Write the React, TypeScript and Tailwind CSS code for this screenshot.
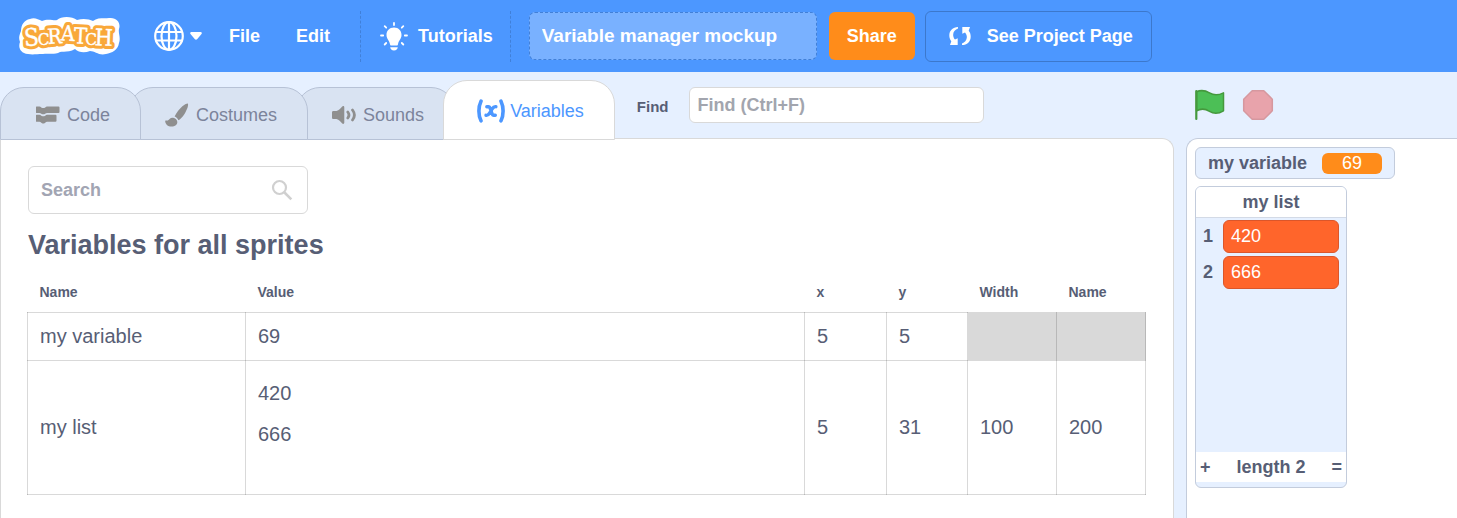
import React from "react";

const LETTERS = [
  { c: "S", x: 32, y: 45.5, s: 24, r: -3 },
  { c: "C", x: 43.5, y: 45, s: 17, r: 0 },
  { c: "R", x: 55, y: 43.5, s: 21, r: -4 },
  { c: "A", x: 67.5, y: 40.5, s: 21, r: 3 },
  { c: "T", x: 80, y: 43.5, s: 22, r: 3 },
  { c: "C", x: 91, y: 44.5, s: 17, r: 0 },
  { c: "H", x: 103.5, y: 45.5, s: 23, r: 2 },
];

function LogoLetters({ stroke, width }: { stroke: string; width: number }) {
  return (
    <g stroke={stroke} strokeWidth={width} fill={stroke} strokeLinejoin="round">
      {LETTERS.map((l, i) => (
        <text
          key={i}
          x={l.x}
          y={l.y}
          fontSize={l.s}
          textAnchor="middle"
          transform={`rotate(${l.r} ${l.x} ${l.y})`}
        >
          {l.c}
        </text>
      ))}
    </g>
  );
}

function Logo() {
  return (
    <svg
      viewBox="19 16 102 40"
      className="h-10 w-[102px] shrink-0 font-['DejaVu_Serif_Condensed','DejaVu_Serif',serif] font-normal"
      role="img"
      aria-label="Scratch"
    >
      <path
        d="M30 19C34 17 38 19 42 21C48 18 54 21 57 20C61 16 72 16 77 20C83 18 89 19 93 21C98 17 105 19 109 18C117 17 121 23 119 29C118 33 121 38 119 43C118 50 112 53 106 54C99 56 95 51 90 51C85 53 79 53 75 49C69 53 63 51 60 52C55 55 48 53 43 54C36 54 33 55 28 54C20 53 18 47 20 42C18 37 20 34 21 31C21 25 24 20 30 19Z"
        fill="#fff"
      />
      <LogoLetters stroke="#F9A83A" width={6.5} />
      <path d="M32 37.500L104 36" stroke="#F9A83A" strokeWidth="14" />
      <LogoLetters stroke="#fff" width={0.4} />
    </svg>
  );
}

function GlobeIcon() {
  return (
    <svg viewBox="0 0 30 30" className="size-[30px]" fill="none" stroke="#fff" strokeWidth="2.200" aria-hidden="true">
      <circle cx="15" cy="15" r="13.800" />
      <ellipse cx="15" cy="15" rx="7.500" ry="13.800" />
      <path d="M15 1V29M1.500 11H28.500M1.500 19.500H28.500" />
    </svg>
  );
}

function BulbIcon() {
  return (
    <svg viewBox="0 0 28 30" className="h-[30px] w-7 shrink-0" aria-hidden="true">
      <path
        d="M14 6.500C9.400 6.500 6.500 9.800 6.500 14C6.500 18 9.500 19.500 10 23.200C10.100 24 10.500 24.500 11.300 24.500H16.700C17.500 24.500 17.900 24 18 23.200C18.500 19.500 21.500 18 21.500 14C21.500 9.800 18.600 6.500 14 6.500ZM10.200 26.300H17.800C17.600 28.200 16.300 29.500 14 29.500C11.700 29.500 10.400 28.200 10.200 26.300Z"
        fill="#fff"
      />
      <path
        d="M14 2V4M4.700 5.200L6.200 6.700M23.300 5.200L21.800 6.700M1 14.500H3.200M24.800 14.500H27M4.700 23.500L6.200 22M23.300 23.500L21.800 22"
        stroke="#fff"
        strokeWidth="1.800"
        strokeLinecap="round"
      />
    </svg>
  );
}

function RemixIcon() {
  return (
    <svg viewBox="0 0 22 20" className="h-5 w-[22px] shrink-0" fill="#fff" aria-hidden="true">
      <path d="M9 .900C3.800 .900 .300 4.500 .300 9.300C.300 11.800 1 13.700 2.300 15.200L1 19H8.700V12.200L6 13.500C4.600 12 4 10.300 4.200 8.200C4.400 5.700 6.300 3.500 9 2.600Z" />
      <path d="M13 19.100C18.200 19.100 21.700 15.500 21.700 10.700C21.700 8.200 21 6.300 19.700 4.800L21 1H13.300V7.800L16 6.500C17.400 8 18 9.700 17.800 11.800C17.600 14.300 15.700 16.500 13 17.400Z" />
    </svg>
  );
}

function CodeIcon() {
  return (
    <svg viewBox="0 0 24 18" className="h-[18px] w-6" fill="#8f8f8f" aria-hidden="true">
      <path d="M0 1Q0 .500 .5 .500H3.500Q4.500 .500 5 1.300Q5.500 2 6.500 2H8Q9 2 9.500 1.300Q10 .500 11 .500H22.500Q23.500 .500 23.500 1.500V5.900Q23.500 6.900 22.500 6.900H11Q10 6.900 9.500 7.600Q9 8.300 8 8.300H6.500Q5.500 8.300 5 7.600Q4.500 6.900 3.500 6.900H.5Q0 6.900 0 6.400Z" />
      <path d="M0 9.200Q0 8.700 .5 8.700H3.500Q4.500 8.700 5 9.500Q5.500 10.200 6.500 10.200H8Q9 10.200 9.500 9.500Q10 8.700 11 8.700H19.500Q20.500 8.700 20.500 9.700V14.800Q20.500 15.800 19.500 15.800H11Q10 15.800 9.500 16.600Q9 17.400 8 17.400H6.500Q5.500 17.400 5 16.600Q4.500 15.800 3.500 15.800H.5Q0 15.800 0 15.300Z" />
    </svg>
  );
}

function BrushIcon() {
  return (
    <svg viewBox="0 0 24 24" className="size-6" fill="#8f8f8f" aria-hidden="true">
      <path d="M22.800 .600C20 .500 15 5 12 9.500C11 11 10 12.500 9.600 13.600C11.300 14.200 12.800 15.500 13.400 17.300C15 16.500 17.500 14 19.500 11C22 7 23.800 2.500 22.800 .600Z" />
      <path d="M8.200 14.800C5.500 14.300 4.300 16.200 3.500 17C2.300 17.800 .8 17.500 .2 17.700C0 21 3 23.600 6.500 23.600C10 23.600 12.600 21.500 12.300 18.700C12 16.600 10.300 15 8.200 14.800Z" />
    </svg>
  );
}

function SpeakerIcon() {
  return (
    <svg viewBox="0 0 24 20" className="h-5 w-6" aria-hidden="true">
      <path
        d="M1.500 6H4.500C7 5.500 8.500 3.500 10 1.800C11 .600 12.300 1 12.300 2.500V17.500C12.300 19 11 19.400 10 18.200C8.500 16.500 7 14.500 4.500 14H1.500C.5 14 0 13.500 0 12.500V7.500C0 6.500 .5 6 1.500 6Z"
        fill="#8f8f8f"
      />
      <path
        d="M15.800 7C17.200 8.800 17.200 11.200 15.800 13M20.500 5C22.800 8 22.800 12 20.500 15"
        fill="none"
        stroke="#8f8f8f"
        strokeWidth="2.800"
        strokeLinecap="round"
      />
    </svg>
  );
}

function VariableIcon() {
  return (
    <svg viewBox="0 0 28 24" className="h-6 w-7" fill="none" stroke="#4C97FF" strokeLinecap="round" aria-hidden="true">
      <path d="M4 2.200C1.200 8 1.200 16 4 21.800M24 2.200C26.800 8 26.800 16 24 21.800" strokeWidth="3.600" />
      <path
        d="M9.800 7.700H11.400C12.600 7.700 12.900 8.600 13.300 9.800L14.900 14.200C15.300 15.400 15.600 16.300 16.800 16.300H18.300M18.900 7.700C17 7.300 16 8.600 15 10.200L12.800 13.800C11.800 15.400 11 16.700 9 16.300"
        strokeWidth="3.400"
      />
    </svg>
  );
}

function FlagIcon() {
  return (
    <svg viewBox="0 0 32 32" className="size-8" aria-hidden="true">
      <path
        d="M2.500 2.800C7 .800 11 1.300 15.500 3.800C19.500 6.300 24.500 6.300 29.500 3.800V21.800C24.500 24.800 19.500 24.800 15.500 22.300C11.500 19.800 7 19.300 2.500 21.800Z"
        fill="#4CBF56"
        stroke="#45993D"
        strokeWidth="1.500"
        strokeLinejoin="round"
      />
      <path d="M2.300 2V30" stroke="#45993D" strokeWidth="2.200" strokeLinecap="round" />
    </svg>
  );
}

function StopIcon() {
  return (
    <svg viewBox="0 0 32 32" className="size-8" aria-hidden="true">
      <path
        d="M10.200 1.700H21.800L30.300 10.200V21.800L21.800 30.300H10.200L1.700 21.800V10.200Z"
        fill="#E8A3AB"
        stroke="#D6989F"
        strokeWidth="1.500"
        strokeLinejoin="round"
      />
    </svg>
  );
}

function MenuBar() {
  return (
    <header className="flex h-[72px] shrink-0 items-center bg-[#4C97FF] pl-[19px] text-lg font-bold text-white">
      <Logo />
      <button type="button" aria-label="Language" className="ml-[33px] flex items-center gap-1.5">
        <GlobeIcon />
        <svg viewBox="0 0 12 8" className="h-2 w-3" fill="#fff" aria-hidden="true">
          <path d="M1.200 0H10.800Q12.500 .500 11.500 2L7.300 7Q6 8.500 4.700 7L.5 2Q-.5 .500 1.200 0Z" />
        </svg>
      </button>
      <nav className="ml-[27px] flex items-center gap-9">
        <button type="button">File</button>
        <button type="button">Edit</button>
      </nav>
      <div className="ml-[30px] flex h-[51px] items-center border-x border-dashed border-black/15 pl-[19px] pr-[17px]">
        <button type="button" className="flex items-center gap-[10px]">
          <BulbIcon />
          Tutorials
        </button>
      </div>
      <input
        aria-label="Project title"
        defaultValue="Variable manager mockup"
        className="ml-[18px] h-12 w-72 rounded-md border border-dashed border-[#4280D7] bg-white/25 px-3 text-[19px] font-bold text-white outline-none"
      />
      <button type="button" className="ml-3 h-12 rounded-md bg-[#FF8C1A] px-[18px]">
        Share
      </button>
      <a
        href="#project"
        className="ml-[10px] flex h-[51px] items-center gap-4 rounded-md border border-black/20 pl-[23px] pr-[18px]"
      >
        <RemixIcon />
        See Project Page
      </a>
    </header>
  );
}

const tabBase = "relative flex items-center rounded-t-3xl border pr-[30px] pt-0.5 text-lg";
const tabIdle = "h-[53px] gap-[7px] border-[#B7C2D6] bg-[#D9E3F2] pl-[35px] text-[#7C849B]";

function Tabs() {
  return (
    <div role="tablist" className="relative z-10 flex items-end">
      <button type="button" role="tab" aria-selected="false" className={`${tabBase} ${tabIdle} z-30`}>
        <CodeIcon />
        Code
      </button>
      <button type="button" role="tab" aria-selected="false" className={`${tabBase} ${tabIdle} z-20 -ml-3`}>
        <BrushIcon />
        Costumes
      </button>
      <button type="button" role="tab" aria-selected="false" className={`${tabBase} ${tabIdle} z-10 -ml-3`}>
        <SpeakerIcon />
        Sounds
      </button>
      <button
        type="button"
        role="tab"
        aria-selected="true"
        className={`${tabBase} z-40 -ml-3 h-[60px] gap-[5px] border-[#D9D9D9] bg-white pl-[33px] text-[#4C97FF]`}
      >
        <VariableIcon />
        Variables
      </button>
    </div>
  );
}

const cell = "border border-black/15 px-3 text-left";

function VariableTable() {
  return (
    <table className="w-full table-fixed border-collapse text-xl">
      <colgroup>
        <col className="w-[218px]" />
        <col />
        <col className="w-[82px]" />
        <col className="w-[81px]" />
        <col className="w-[89px]" />
        <col className="w-[89px]" />
      </colgroup>
      <thead>
        <tr className="h-10 text-sm">
          {["Name", "Value", "x", "y", "Width", "Name"].map((h, i) => (
            <th key={i} scope="col" className="px-3 text-left font-bold">
              {h}
            </th>
          ))}
        </tr>
      </thead>
      <tbody>
        <tr className="h-12">
          <td className={cell}>my variable</td>
          <td className={cell}>69</td>
          <td className={cell}>5</td>
          <td className={cell}>5</td>
          <td className={`${cell} border-t-[#D9D9D9] bg-[#D9D9D9]`} />
          <td className={`${cell} border-t-[#D9D9D9] bg-[#D9D9D9]`} />
        </tr>
        <tr className="h-[134px]">
          <td className={cell}>my list</td>
          <td className={`${cell} pt-3 align-top leading-[41px]`}>
            <ul>
              <li>420</li>
              <li>666</li>
            </ul>
          </td>
          <td className={cell}>5</td>
          <td className={cell}>31</td>
          <td className={cell}>100</td>
          <td className={cell}>200</td>
        </tr>
      </tbody>
    </table>
  );
}

function Editor() {
  return (
    <section className="flex min-w-0 flex-1 flex-col">
      <div className="-mb-0.5 flex h-[68px] shrink-0 items-end">
        <Tabs />
        <label htmlFor="find" className="mb-4 ml-[22px] flex h-9 items-center pt-0.5 text-[15px] font-bold">
          Find
        </label>
        <input
          id="find"
          placeholder="Find (Ctrl+F)"
          className="mb-[17px] ml-5 h-9 w-[295px] rounded-md border border-[#D9D9D9] bg-white px-2 text-lg font-bold outline-none placeholder:text-[#A2A5AE]"
        />
      </div>
      <div className="flex-1 rounded-tr-xl border border-b-0 border-[#D9D9D9] bg-white pl-[26px] pr-[27px] pt-[27px]">
        <label className="ml-px flex h-12 w-[280px] items-center rounded-md border border-[#D9D9D9] pl-3 pr-[14px]">
          <input
            type="text"
            aria-label="Search"
            placeholder="Search"
            className="min-w-0 flex-1 text-lg font-bold outline-none placeholder:text-[#A2A5B3]"
          />
          <svg viewBox="0 0 22 22" className="size-[22px]" fill="none" stroke="#D0D0D0" aria-hidden="true">
            <circle cx="8.500" cy="8.500" r="6.500" strokeWidth="2.200" />
            <path d="M13 13L20.300 20.300" strokeWidth="2.600" />
          </svg>
        </label>
        <h1 className="mb-2 ml-px mt-3 text-[27px] font-bold leading-[38px]">Variables for all sprites</h1>
        <VariableTable />
      </div>
    </section>
  );
}

function ListMonitor() {
  return (
    <div className="mt-[7px] flex h-[302px] w-[152px] flex-col overflow-hidden rounded-md border border-[#C3CCDC] bg-[#E6F0FF] font-bold">
      <div className="flex h-[31px] shrink-0 items-center justify-center border-b border-[#D3DAE6] bg-white">my list</div>
      <ol className="flex flex-1 flex-col gap-[3px] px-[7px] pt-0.5">
        {["420", "666"].map((v, i) => (
          <li key={v} className="flex items-center">
            <span className="w-5 pb-0.5">{i + 1}</span>
            <span className="flex h-[33px] flex-1 items-center rounded-md border border-[#DB562A] bg-[#FF652B] px-[7px] pb-0.5 font-normal text-white">
              {v}
            </span>
          </li>
        ))}
      </ol>
      <div className="mb-[5px] flex h-[30px] shrink-0 items-center justify-between bg-white px-1">
        <button type="button" aria-label="Add item">+</button>
        <span>length 2</span>
        <span>=</span>
      </div>
    </div>
  );
}

function Stage() {
  return (
    <section className="ml-3 flex w-[271px] shrink-0 flex-col">
      <div className="flex h-[66px] shrink-0 items-center gap-4 pl-2">
        <button type="button" aria-label="Go">
          <FlagIcon />
        </button>
        <button type="button" aria-label="Stop">
          <StopIcon />
        </button>
      </div>
      <div className="flex-1 rounded-tl-xl border-l border-t border-[#C3CCDC] bg-white pl-2 pt-2 text-lg">
        <div className="flex h-8 w-[200px] items-center justify-between rounded-md border border-[#C3CCDC] bg-[#E6F0FF] px-3 font-bold">
          my variable
          <span className="flex h-[21px] w-[60px] items-center justify-center rounded-md bg-[#FF8C1A] font-normal text-white">
            69
          </span>
        </div>
        <ListMonitor />
      </div>
    </section>
  );
}

export default function App() {
  return (
    <div className="flex h-screen flex-col overflow-hidden bg-[#E6F0FF] font-['Liberation_Sans',Arial,sans-serif] text-[#575E75]">
      <MenuBar />
      <main className="flex min-h-0 flex-1">
        <Editor />
        <Stage />
      </main>
    </div>
  );
}
